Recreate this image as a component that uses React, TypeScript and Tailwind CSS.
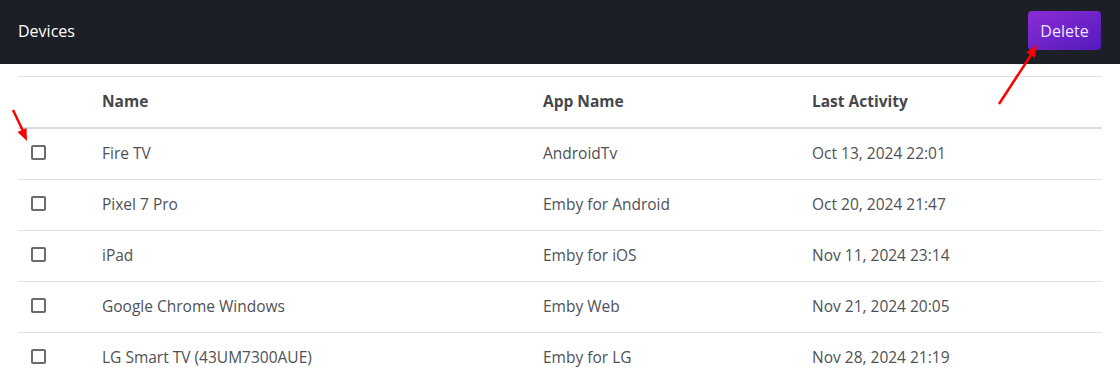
import React from "react";

const rows = [
  ["Fire TV", "AndroidTv", "Oct 13, 2024 22:01"],
  ["Pixel 7 Pro", "Emby for Android", "Oct 20, 2024 21:47"],
  ["iPad", "Emby for iOS", "Nov 11, 2024 23:14"],
  ["Google Chrome Windows", "Emby Web", "Nov 21, 2024 20:05"],
  ["LG Smart TV (43UM7300AUE)", "Emby for LG", "Nov 28, 2024 21:19"],
];

function Checkbox() {
  return <div className="w-[15px] h-[15px] border-2 border-[#6b6b6b] rounded-[2px]" />;
}

export default function App() {
  return (
    <div className="relative w-[1120px] h-[382px] overflow-hidden bg-white font-['Open_Sans',sans-serif]">
      <header className="h-[64px] bg-[#1d1f27] flex items-center justify-between pl-[18px] pr-[19px]">
        <span className="text-[16px] text-white -mt-[2px]">Devices</span>
        <button className="h-[39px] w-[73px] -mt-[3px] rounded-[4px] bg-gradient-to-br from-[#8b2bd6] to-[#5418bd] text-[#ece4ff] text-[16px]">
          Delete
        </button>
      </header>
      <div className="mx-[18px] mt-[12px] border-t border-[#e1e1e4]">
        <div className="grid grid-cols-[84px_441px_269px_1fr] h-[52px] items-center border-b-2 border-[#dcdce0] text-[15.5px] font-bold text-[#45474d]">
          <div />
          <div>Name</div>
          <div>App Name</div>
          <div>Last Activity</div>
        </div>
        {rows.map((r, i) => (
          <div
            key={i}
            className="grid grid-cols-[84px_441px_269px_1fr] h-[51px] items-center border-b border-[#e1e1e4] text-[15.5px] text-[#4f5157]"
          >
            <div className="pl-[13px] -mt-[3px]">
              <Checkbox />
            </div>
            <div className="-mt-[1px]">{r[0]}</div>
            <div className="-mt-[1px]">{r[1]}</div>
            <div className="-mt-[1px]">{r[2]}</div>
          </div>
        ))}
      </div>
      <svg className="absolute inset-0 pointer-events-none" width="1120" height="382">
        <line x1="13" y1="110" x2="23" y2="131" stroke="#f00" strokeWidth="2.5" />
        <polygon points="27,141 26.5,128 17.5,132" fill="#f00" />
        <line x1="999" y1="104" x2="1031" y2="55" stroke="#f00" strokeWidth="2.5" />
        <polygon points="1037,45 1034.7,57.7 1026.3,52.3" fill="#f00" />
      </svg>
    </div>
  );
}
